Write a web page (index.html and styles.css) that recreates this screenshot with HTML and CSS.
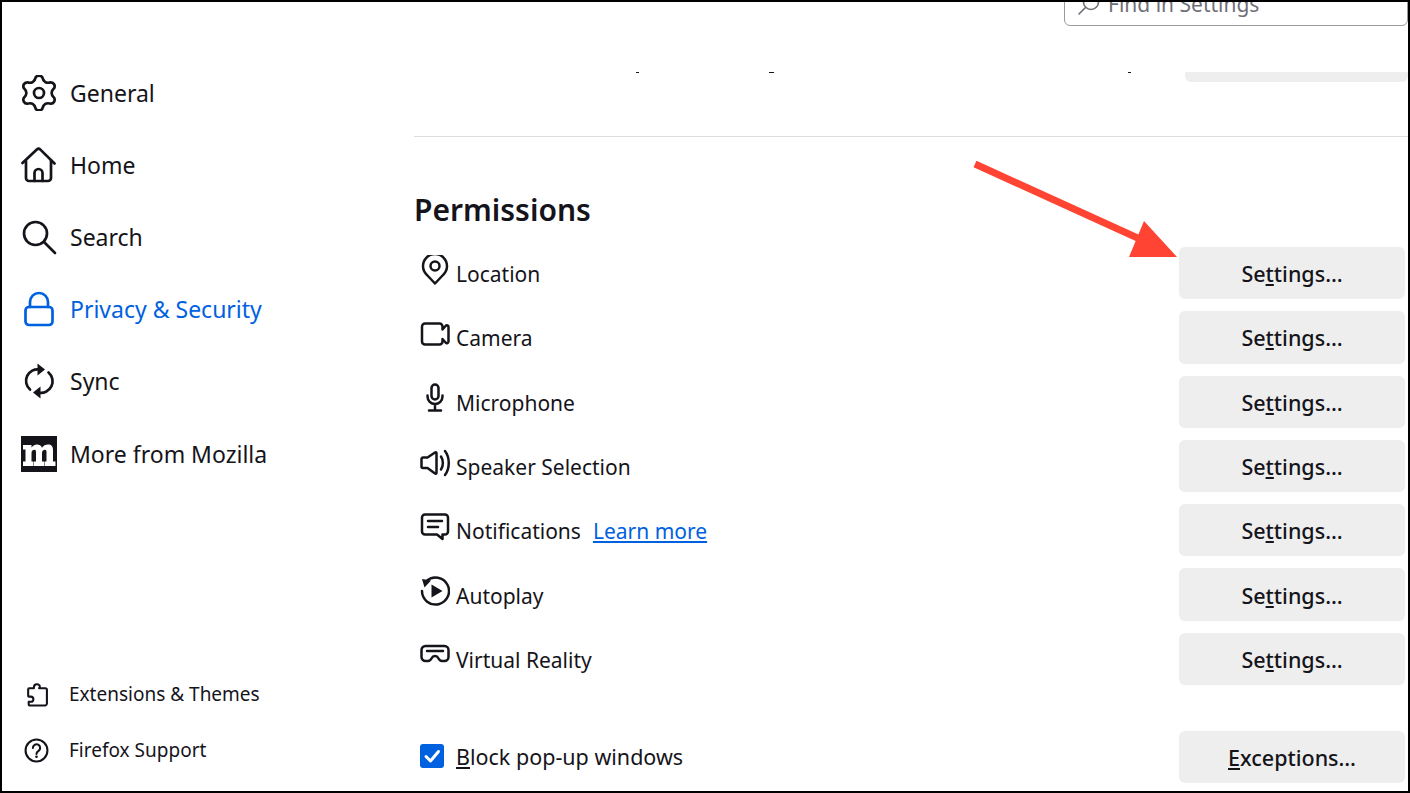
FILE: index.html
```html
<!DOCTYPE html>
<html lang="en">
<head>
<meta charset="utf-8">
<title>Settings</title>
<link rel="stylesheet" href="styles.css">
</head>
<body>
<div class="frame">
  <aside class="sidebar">
    <nav class="nav">
      <a class="nav-item"><svg class="nav-icon" viewBox="0 0 36 36"><path class="s" d="M14.67 2.35A4 4 0 0 1 21.33 2.35Q23 9.34 29.89 7.29A4 4 0 0 1 33.22 13.06Q28 18 33.22 22.94A4 4 0 0 1 29.89 28.71Q23 26.66 21.33 33.65A4 4 0 0 1 14.67 33.65Q13 26.66 6.11 28.71A4 4 0 0 1 2.78 22.94Q8 18 2.78 13.06A4 4 0 0 1 6.11 7.29Q13 9.34 14.67 2.35Z"/><circle class="s" cx="18" cy="18" r="5"/></svg><span>General</span></a>
      <a class="nav-item"><svg class="nav-icon" viewBox="0 0 36 36"><path class="s" d="M1.500 16 15.800 2.600a2.600 2.600 0 0 1 3.600 0L33.500 16.500"/><path class="s" d="M5 14v17a3 3 0 0 0 3 3h19a3 3 0 0 0 3-3V14"/><path class="s" d="M13.500 34V26a4 4 0 0 1 8 0v8"/></svg><span>Home</span></a>
      <a class="nav-item"><svg class="nav-icon" viewBox="0 0 36 36"><circle class="s" cx="14.500" cy="14.500" r="11.500"/><path class="s" d="M23 23 34 34"/></svg><span>Search</span></a>
      <a class="nav-item is-active"><svg class="nav-icon" viewBox="0 0 36 36"><path class="s" d="M9 16V11a9 9 0 0 1 18 0v5"/><rect class="s" x="4.500" y="16" width="27" height="18" rx="3.500"/></svg><span>Privacy &amp; Security</span></a>
      <a class="nav-item"><svg class="nav-icon" viewBox="0 0 36 36"><path class="s" d="M9 26.500A11.500 11.500 0 0 1 18.500 6.500"/><path class="s" d="M27.500 9.500A11.500 11.500 0 0 1 17.500 29.500"/><path class="f" d="M16.500 0.500 24 6.500 16.500 12.500Z"/><path class="f" d="M19.500 23.500 12 29.500 19.500 35.500Z"/></svg><span>Sync</span></a>
      <a class="nav-item"><svg class="nav-icon" viewBox="0 0 36 36"><rect class="f" width="36" height="36"/><path class="w" d="M2 9H10.500V11.500C12 9.500 14 8.500 16 8.500C18.500 8.500 20 9.500 21 11.800C22.500 9.500 24.500 8.500 27 8.500C30.500 8.500 32 10.500 32 14V25.500H34.500V30H23.500V25.500H25.500V16.500C25.500 14.500 25 13.800 24 13.800C22.500 13.800 21 15 21 17V25.500H23V30H13V25.500H15V16.500C15 14.500 14.500 13.800 13.500 13.800C12 13.800 10.500 15 10.500 17V25.500H12.500V30H2V25.500H4.500V13.500H2Z"/></svg><span>More from Mozilla</span></a>
    </nav>
    <div class="foot">
      <a class="foot-item"><svg class="foot-icon" viewBox="0 0 24 24"><path class="s2" d="M5 6h4.500V5a3 3 0 0 1 5.500-1.500c.5 1 0 2-.5 2.500h6a1.500 1.500 0 0 1 1.500 1.500v13.500a2 2 0 0 1-1.500 1.500H6a1.500 1.500 0 0 1-1.500-1.500V19h2a2.500 2.500 0 0 0 0-5h-2a1 1 0 0 1-.5-1V7a1 1 0 0 1 1-1Z"/></svg><span>Extensions &amp; Themes</span></a>
      <a class="foot-item"><svg class="foot-icon" viewBox="0 0 24 24"><circle class="s2" cx="12" cy="12" r="10.500"/><path class="s2" d="M8.500 9.500a3.500 3.500 0 1 1 5.500 2.900c-1.300.9-2 1.400-2 2.900"/><circle class="f" cx="12" cy="18" r="1.300"/></svg><span>Firefox Support</span></a>
    </div>
  </aside>

  <main class="main">
    <div class="search">
      <svg class="search-icon" viewBox="0 0 22 22"><circle class="sg" cx="13" cy="9" r="7.500"/><path class="sg" d="M7.500 14.500 1 21"/></svg>
      <span class="search-text">Find in Settings</span>
    </div>

    <div class="clipped">
      <i class="tick t1"></i><i class="tick t2"></i><i class="tick t3"></i>
      <div class="clipped-btn"></div>
    </div>

    <hr class="rule">

    <h2 class="heading">Permissions</h2>

    <div class="rows">
      <div class="row"><div class="label"><svg class="perm-icon" viewBox="0 0 30 30"><path class="s3" d="M15 28.500 6.500 19.500A12 12 0 1 1 23.500 19.500Z"/><circle class="s3" cx="15" cy="11" r="4.500"/></svg><span>Location</span></div><button class="btn">Se<u>t</u>tings…</button></div>
      <div class="row"><div class="label"><svg class="perm-icon" viewBox="0 0 30 30"><path class="s3" d="M5 4.500h14.500a3 3 0 0 1 3 3v3L26 6.500c.7-.5 2.500 0 2.500 1.500v14.500c0 1.500-1.800 2-2.500 1.500l-3.500-4v2.500a3 3 0 0 1-3 3H5a3 3 0 0 1-3-3v-15a3 3 0 0 1 3-3Z"/></svg><span>Camera</span></div><button class="btn">Se<u>t</u>tings…</button></div>
      <div class="row"><div class="label"><svg class="perm-icon" viewBox="0 0 30 30"><rect class="s3" x="11.500" y="1.500" width="7" height="15" rx="3.500"/><path class="s3" d="M7.500 12.500v1a7.500 7.500 0 0 0 15 0v-1M15 21v6.500M9 27.500h12"/></svg><span>Microphone</span></div><button class="btn">Se<u>t</u>tings…</button></div>
      <div class="row"><div class="label"><svg class="perm-icon" viewBox="0 0 30 30"><path class="s3" d="M3 9.500h4.500L15 4.500c.8-.5 1.500 0 1.500.8v19.400c0 .8-.7 1.300-1.500.8L7.500 20H3a1.500 1.500 0 0 1-1.500-1.500v-7.500A1.500 1.500 0 0 1 3 9.500Z"/><path class="s3" d="M21 8.500c2.500 3.700 2.500 9.300 0 13"/><path class="s3" d="M25 3c5 6.500 5 17.500 0 24"/></svg><span>Speaker Selection</span></div><button class="btn">Se<u>t</u>tings…</button></div>
      <div class="row"><div class="label"><svg class="perm-icon" viewBox="0 0 30 30"><path class="s3" d="M5 2.500h20a3 3 0 0 1 3 3v14a3 3 0 0 1-3 3h-2.500V27l-5.500-4.500H5a3 3 0 0 1-3-3v-14a3 3 0 0 1 3-3Z"/><path class="s3" d="M8 9h14M8 15h10"/></svg><span>Notifications</span><a class="learn">Learn more</a></div><button class="btn">Se<u>t</u>tings…</button></div>
      <div class="row"><div class="label"><svg class="perm-icon" viewBox="0 0 30 30"><path class="s3" d="M6.500 5A13.500 13.500 0 1 1 2 15"/><path class="f" d="M2 3l9 1.500-6.500 7Z"/><path class="f" d="M11.500 8.500 22.500 15l-11 6.500Z"/></svg><span>Autoplay</span></div><button class="btn">Se<u>t</u>tings…</button></div>
      <div class="row"><div class="label"><svg class="perm-icon" viewBox="0 0 30 30"><path class="s3" d="M5.500 6h19a4 4 0 0 1 4 4v7a4 4 0 0 1-4 4h-2.500c-2 0-2.800-1-3.800-3-.7-1.500-1.800-2-3.200-2s-2.500.5-3.200 2c-1 2-1.800 3-3.800 3H5.500a4 4 0 0 1-4-4v-7a4 4 0 0 1 4-4Z"/><path class="s3" d="M7 11h16"/></svg><span>Virtual Reality</span></div><button class="btn">Se<u>t</u>tings…</button></div>
    </div>

    <div class="row row-check">
      <div class="label">
        <span class="check"><svg viewBox="0 0 24 24"><path class="tick-mark" d="M6 12.500 10.500 17 18.500 7.500"/></svg></span>
        <span><u>B</u>lock pop-up windows</span>
      </div>
      <button class="btn"><u>E</u>xceptions…</button>
    </div>
  </main>

  <svg class="arrow" viewBox="0 0 240 110"><path class="arrow-line" d="M3 4 170 80"/><path class="arrow-head" d="M172 61 205 97 157 97Z"/></svg>
</div>
</body>
</html>
```
FILE: styles.css
```css
* { box-sizing: border-box; }
html, body { margin: 0; padding: 0; background: #fff; }
body { width: 1410px; height: 793px; overflow: hidden; font-family: "Noto Sans", "Open Sans", sans-serif; color: #15141a; }

.frame { position: relative; width: 1410px; height: 793px; border: 2px solid #000; display: flex; overflow: hidden; background: #fff; }

.sidebar { width: 412px; flex: none; display: flex; flex-direction: column; padding: 55px 0 13px 19px; }
.nav { display: flex; flex-direction: column; }
.nav-item { height: 72.1px; display: flex; align-items: center; gap: 13px; font-size: 23px; }
.nav-icon { width: 36px; height: 36px; flex: none; }
.is-active { color: #0061e0; }
.foot { margin-top: auto; display: flex; flex-direction: column; }
.foot-item { height: 56px; display: flex; align-items: center; font-size: 19px; gap: 20px; padding-left: 3px; }
.foot-icon { width: 25px; height: 25px; flex: none; }

.s { fill: none; stroke: currentColor; stroke-width: 2.7; stroke-linecap: round; stroke-linejoin: round; }
.s2 { fill: none; stroke: currentColor; stroke-width: 2; stroke-linecap: round; stroke-linejoin: round; }
.s3 { fill: none; stroke: currentColor; stroke-width: 2.5; stroke-linecap: round; stroke-linejoin: round; }
.sg { fill: none; stroke: #6f6f78; stroke-width: 1.6; stroke-linecap: round; }
.f { fill: currentColor; }
.w { fill: #fff; }

.main { flex: 1; min-width: 0; display: flex; flex-direction: column; }

.search { width: 344px; height: 40px; margin: -16px 0 0 650px; flex: none; border: 1px solid #9a9a9a; border-radius: 6px; display: flex; align-items: center; padding: 0 0 4px 13px; gap: 8px; }
.search-icon { width: 22px; height: 22px; flex: none; }
.search-text { font-size: 21px; color: #6f6f78; }

.clipped { height: 10px; margin-top: 46px; flex: none; display: flex; }
.tick { flex: none; height: 1px; background: #15141a; }
.t1 { width: 3px; margin-left: 222px; }
.t2 { width: 5px; margin-left: 130px; }
.t3 { width: 3px; margin-left: 354px; }
.clipped-btn { flex: none; width: 223px; height: 10px; margin-left: 54px; background: #eee; border-radius: 0 0 6px 6px; }

.rule { height: 1px; margin: 54px 0 0; border: 0; background: #ddd; flex: none; }

.heading { margin: 51px 0 0; font-size: 30px; line-height: 44px; font-weight: 600; flex: none; }

.rows { display: flex; flex-direction: column; gap: 12px; margin-top: 15px; flex: none; }
.row { height: 52.3px; display: flex; align-items: center; justify-content: space-between; padding: 0 3px 0 6px; flex: none; }
.label { display: flex; align-items: center; gap: 6px; font-size: 21px; padding-top: 2px; }
.perm-icon { width: 30px; height: 30px; flex: none; margin-bottom: 9px; }
.learn { color: #0061e0; text-decoration: underline; margin-left: 6px; }
.btn { width: 226px; height: 100%; border: 0; border-radius: 6px; background: #eee; color: #15141a; font: 500 21.5px "Noto Sans", "Open Sans", sans-serif; padding: 1px 0 0; }

.row-check { margin-top: 45.7px; }
.row-check .label { gap: 12px; font-size: 21.5px; padding-top: 0; }
.check { width: 24px; height: 24px; border-radius: 3px; background: #0061e0; display: block; flex: none; margin-bottom: 1px; }
.check svg { display: block; width: 24px; height: 24px; }
.tick-mark { fill: none; stroke: #fff; stroke-width: 3; stroke-linecap: round; stroke-linejoin: round; }

.arrow { position: absolute; left: 970px; top: 158px; width: 240px; height: 110px; }
.arrow-line { fill: none; stroke: #ff4433; stroke-width: 7; }
.arrow-head { fill: #ff4433; }
```
